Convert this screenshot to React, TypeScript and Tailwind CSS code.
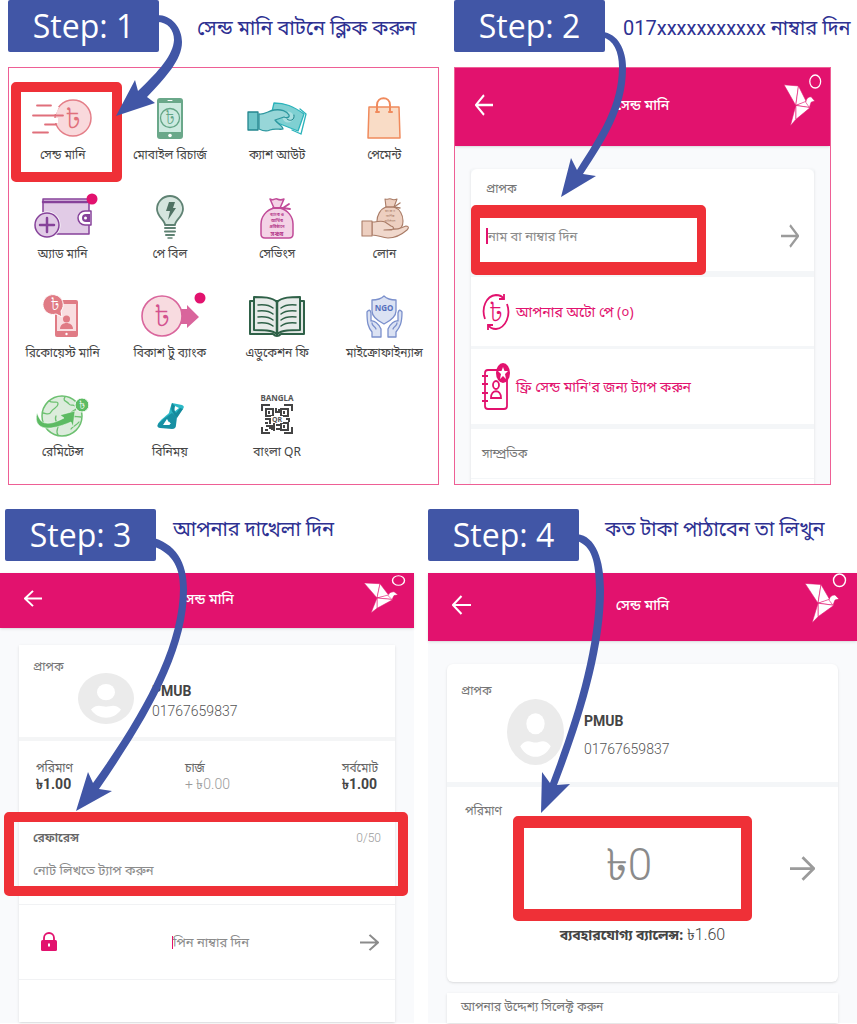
import { FC, ReactNode } from "react";

const TAKA = "৳";

/* ---------- menu icons, all on a 64x48 board ---------- */

const Board: FC<{ children: ReactNode }> = ({ children }) => (
	<svg viewBox="0 0 64 48" className="h-12 w-16 overflow-visible" fill="none" strokeLinecap="round" strokeLinejoin="round" aria-hidden="true">
		{children}
	</svg>
);

const Taka: FC<{ x: number; y: number; size: number; color: string }> = ({ x, y, size, color }) => (
	<text x={x} y={y} fontSize={size} fontWeight="300" fill={color} stroke="none" textAnchor="middle">
		{TAKA}
	</text>
);

const SendIcon = () => (
	<Board>
		<circle cx="42" cy="23" r="18" fill="#f9d9dc" stroke="#e47e88" strokeWidth="1.5" />
		<path d="M22 12h6l-3 7h-3zM21 23h6v5h-5z" fill="#fff" />
		<path d="M6 10.5h14M2 20.5h30M14 29.5h11M2 37.5h15" stroke="#e06f7b" strokeWidth="1.8" />
		<Taka x={42} y={33} size={28} color="#e06f7b" />
	</Board>
);

const RechargeIcon = () => (
	<Board>
		<rect x="19" y="3" width="26" height="41" rx="3" fill="#6aa88a" />
		<rect x="21" y="8" width="22" height="29" fill="#cdeae0" />
		<path d="M30 5.5h4" stroke="#fff" />
		<circle cx="32" cy="40.5" r="1.8" fill="#fff" />
		<circle cx="32" cy="23" r="9.5" stroke="#63a586" strokeWidth="1.3" />
		<Taka x={32} y={29} size={17} color="#63a586" />
	</Board>
);

const CashOutIcon = () => (
	<Board>
		<path d="M55 14l6 5-5 20-9-4" fill="#fff" stroke="#2bb3bb" strokeWidth="1.3" />
		<path d="M29 8c11 0 19 3 30 11l-6 17-28-11z" fill="#7fd0d2" stroke="#2bb3bb" strokeWidth="1.3" />
		<circle cx="43" cy="22" r="5.5" fill="#a9dfe0" />
		<path d="M14 19c5 1 9-3 15-4 7-1 13 1 15 5 1 3-3 3-5 2l-9 3c3 4 8 6 8 9-3 1-8-1-13 1-4 2-7 1-11-1z" fill="#97d6d8" stroke="#2d979f" strokeWidth="1.3" />
		<rect x="3" y="17" width="10" height="18" fill="#6fc6c9" stroke="#24868e" strokeWidth="1.3" />
		<path d="M49 20c1 5-4 7-7 4" stroke="#24868e" />
	</Board>
);

const BagIcon = () => (
	<Board>
		<path d="M17 12h30l1 31H16z" fill="#f9dcc6" stroke="#f08a5c" strokeWidth="1.5" />
		<path d="M25 17V10c0-9 13-9 13 0v7" stroke="#f08a5c" strokeWidth="2" />
		<path d="M24 17h3M37 17h3" stroke="#f08a5c" strokeWidth="2" />
	</Board>
);

const WalletIcon = () => (
	<Board>
		<path d="M12 5h46v35H12z" fill="#e1cbe6" stroke="#86429a" strokeWidth="1.5" />
		<path d="M12 8h44" stroke="#86429a" strokeWidth="2.5" />
		<path d="M60 17h-6a7 7 0 0 0 0 14h6z" fill="#fff" stroke="#86429a" strokeWidth="1.5" />
		<path d="M59 20h-4a4 4 0 0 0 0 8h4z" fill="#86429a" />
		<circle cx="54.5" cy="24" r="1.5" fill="#fff" />
		<circle cx="16" cy="31" r="13.5" fill="#fff" />
		<circle cx="16" cy="31" r="12" fill="#e1cbe6" stroke="#86429a" strokeWidth="1.5" />
		<path d="M9 31h14M16 24v14" stroke="#86429a" strokeWidth="2.5" />
		<circle cx="61" cy="5" r="5.5" fill="#e2126e" />
	</Board>
);

const BulbIcon = () => (
	<Board>
		<path d="M27 31c0-5-8-8-8-16a13 13 0 0 1 26 0c0 8-8 11-8 16z" fill="#d5e5de" stroke="#5f8273" strokeWidth="1.8" />
		<path d="M31 8h6l-2 6h3l-8 12 2-9h-4z" fill="#4f7263" />
		<path d="M27 34h10M27 37.5h10M28 41h8" stroke="#5f8273" strokeWidth="2" />
		<path d="M30 44h4" stroke="#5f8273" strokeWidth="1.5" />
	</Board>
);

const SavingsIcon = () => (
	<Board>
		<path d="M25 5c4 2 5-1 7 0s5 1 7 0l-4 9c8 2 13 9 13 16v10q0 4-4 4H20q-4 0-4-4V30c0-7 5-14 13-16z" fill="#f4d3e6" stroke="#c14b98" strokeWidth="1.5" />
		<path d="M28 14h10l6-4M38 14l7 1" stroke="#c14b98" strokeWidth="1.8" />
		<g fill="#b63d8d" fontSize="4" fontWeight="700" textAnchor="middle">
			<text x="32" y="22">ব্যাংক ও</text>
			<text x="32" y="28">আর্থিক</text>
			<text x="32" y="34">প্রতিষ্ঠানে</text>
			<text x="32" y="42" fontSize="6">সঞ্চয়</text>
		</g>
	</Board>
);

const LoanIcon = () => (
	<Board>
		<path d="M33 5c3 1 4-1 6 0s4 1 6 0l-3 8c6 2 9 8 9 14s-3 8-6 8H31c-3 0-6-3-6-8s3-12 9-14z" fill="#edcfc0" stroke="#a97c67" strokeWidth="1.1" />
		<path d="M34 13h8l6-4M42 13l6 1" stroke="#a97c67" strokeWidth="1.4" />
		<g fill="#a97c67" fontSize="3" textAnchor="middle">
			<text x="38" y="18">ব্যাংক ও</text>
			<text x="38" y="23">আর্থিক</text>
			<text x="38" y="28">প্রতিষ্ঠানে</text>
		</g>
		<path d="M20 28c6 0 9-2 13 0l6 4c4 1 3 4-1 4h-6l14-1 8-3c3 0 3 2 1 4-7 6-12 8-19 8-6 0-9-3-16-3z" fill="#f0d8cc" stroke="#a97c67" strokeWidth="1.1" />
		<path d="M10 27h10v15H10z" fill="#edcfc0" stroke="#a97c67" strokeWidth="1.1" />
	</Board>
);

const RequestIcon = () => (
	<Board>
		<rect x="24" y="7" width="23" height="37" rx="2" fill="#e07b85" />
		<path d="M26 11h19v27H26z" fill="#f9dde0" />
		<circle cx="35.5" cy="26" r="3.5" fill="#e07b85" />
		<path d="M29 36c0-8 13-8 13 0z" fill="#e07b85" />
		<circle cx="35.5" cy="41" r="1.2" fill="#fff" />
		<path d="M25 2a10 10 0 1 0 0 19l6 3-1-6a10 10 0 0 0-5-16z" fill="#e07b85" stroke="#fff" />
		<Taka x={24} y={17} size={16} color="#fff" />
	</Board>
);

const ToBankIcon = () => (
	<Board>
		<path d="M43 16h6v-4l12 12-12 11v-4h-6z" fill="#d9659c" />
		<circle cx="24" cy="23" r="20" fill="#f8dbe0" stroke="#d9659c" strokeWidth="1.6" />
		<Taka x={24} y={33} size={29} color="#d3528f" />
		<circle cx="62" cy="5" r="5.5" fill="#e2126e" />
	</Board>
);

const BookIcon = () => (
	<Board>
		<path d="M5 8h54v33H36q-4 4-8 0H5z" fill="#e2e7e4" stroke="#2f6148" strokeWidth="2" />
		<path d="M9 4c9 0 18 0 23 5 5-5 14-5 23-5v33c-9 0-18 0-23 4-5-4-14-4-23-4z" fill="#e7ebe9" stroke="#2f6148" strokeWidth="2" />
		<path d="M32 9v32" stroke="#2f6148" strokeWidth="2.5" />
		<path d="M13 12q10-1 15 3M13 18q10-1 15 3M13 24q10-1 15 3M13 30q10-1 15 3M51 12q-10-1-15 3M51 18q-10-1-15 3M51 24q-10-1-15 3M51 30q-10-1-15 3" stroke="#2f6148" strokeWidth="1.5" />
	</Board>
);

const NgoIcon = () => (
	<Board>
		<path d="M32 3c3 3 7 4 12 4v11c0 6-6 10-12 13-6-3-12-7-12-13V7c5 0 9-1 12-4z" fill="#dbe2f3" stroke="#7b90cc" strokeWidth="1.3" />
		<text x="32" y="18" fontSize="8" fontWeight="700" textAnchor="middle" fill="#5570bd">
			NGO
		</text>
		<path d="M20 44v-5c-4-5-5-9-5-20q3-4 4 1v8c3-1 8 3 10 8v8zM44 44v-5c4-5 6-9 6-20q-3-4-4 1v8c-3-1-8 3-10 8v8z" fill="#dbe2f3" stroke="#7b90cc" strokeWidth="1.3" />
		<path d="M20 30c0 3 3 3 4 6M45 30c0 3-3 3-4 6" stroke="#7b90cc" strokeWidth="1.3" />
	</Board>
);

const RemitIcon = () => (
	<Board>
		<circle cx="31" cy="24" r="20" fill="#dcecdc" stroke="#6cc070" strokeWidth="1.5" />
		<path d="M18 9c4 3 9-1 9 3s-5 4-7 8-5 1-8 1M34 5c-3 4 2 4 4 7s5-1 7 3-6 3-5 7 6 2 10 3M25 24c-2 4 1 6 2 9s-3 5 0 10M40 37c2-3 6-4 8-7" stroke="#6cc070" strokeWidth="1.3" />
		<path d="M6 21c-3 11 3 16 14 15 8-1 15-4 20-6l2 5 2-16-15 4 4 3c-6 3-12 6-18 5-5 0-7-5-9-10z" fill="#5dbb63" stroke="#fff" strokeWidth=".5" />
		<circle cx="51" cy="13" r="7" fill="#5dbb63" stroke="#fff" />
		<Taka x={51} y={17} size={11} color="#fff" />
	</Board>
);

const BinimoyIcon = () => (
	<Board>
		<path fillRule="evenodd" d="M34 11l10 2q3 1 1 4L25 35q-4 0-5-3c2-4 7-7 11-11q1-5 3-10zM37 14l4 2-5 4z" fill="#2bb8c6" />
		<path d="M34 11q-2 6 1 10 2 3 4 5l6-9-3-1-4 5q-3-4-1-7z" fill="#148a9c" />
		<path fillRule="evenodd" d="M20 32q-2 3 2 4l12 1q4 0 4-4l1-8-5-4q-8 5-14 11zM29 27l4 5-7 0z" fill="#1790a3" />
		<path d="M29 27l3 6h-7z" fill="#fff" />
	</Board>
);

const QrIcon = () => (
	<Board>
		<text x="32" y="9" fontSize="8" fontWeight="700" textAnchor="middle" fill="#555">
			BANGLA
		</text>
		<g stroke="#444" strokeLinecap="butt" strokeLinejoin="miter">
			<path d="M17 19v-6h8M39 13h8v6M17 35v6h8M39 41h8v-6" strokeWidth="2" />
			<path d="M21 17h7v7h-7zM36 17h7v7h-7zM36 31h7v7h-7z" strokeWidth="2" />
			<path d="M24 19v3M39 19v3M39 33v3M31 16v4h3v-3M20 27h5v5M21 34h6v4M29 31v8M31 37h4M20 38h3M41 27h3v3M31 33h4M20 31h3M24 36h3" strokeWidth="2" />
		</g>
		<rect x="26" y="24" width="12" height="7" fill="#fff" />
		<text x="32" y="30" fontSize="7" fontWeight="700" textAnchor="middle" fill="#555">
			QR
		</text>
	</Board>
);

const menu = [
	{ label: "সেন্ড মানি", icon: <SendIcon />, marked: true },
	{ label: "মোবাইল রিচার্জ", icon: <RechargeIcon /> },
	{ label: "ক্যাশ আউট", icon: <CashOutIcon /> },
	{ label: "পেমেন্ট", icon: <BagIcon /> },
	{ label: "অ্যাড মানি", icon: <WalletIcon /> },
	{ label: "পে বিল", icon: <BulbIcon /> },
	{ label: "সেভিংস", icon: <SavingsIcon /> },
	{ label: "লোন", icon: <LoanIcon /> },
	{ label: "রিকোয়েস্ট মানি", icon: <RequestIcon /> },
	{ label: "বিকাশ টু ব্যাংক", icon: <ToBankIcon /> },
	{ label: "এডুকেশন ফি", icon: <BookIcon /> },
	{ label: "মাইক্রোফাইন্যান্স", icon: <NgoIcon /> },
	{ label: "রেমিটেন্স", icon: <RemitIcon /> },
	{ label: "বিনিময়", icon: <BinimoyIcon /> },
	{ label: "বাংলা QR", icon: <QrIcon /> }
];

/* ---------- shared parts ---------- */

const StepBadge: FC<{ n: number }> = ({ n }) => (
	<h2 className="flex h-[52px] w-[151px] shrink-0 items-center justify-center rounded-xs bg-[#4156a6] font-['Open_Sans',sans-serif] text-[32px] leading-none text-white">
		Step: {n}
	</h2>
);

const Caption: FC<{ children: ReactNode }> = ({ children }) => (
	<p className="font-[Roboto,'Noto_Sans_Bengali',sans-serif] text-xl leading-10 whitespace-nowrap text-[#2e3192]">{children}</p>
);

const Pointer: FC<{ className: string; viewBox: string; d: string }> = ({ className, viewBox, d }) => (
	<svg className={`pointer-events-none absolute top-0 left-0 z-20 ${className}`} viewBox={viewBox} aria-hidden="true">
		<path d={d} fill="#4156a6" />
	</svg>
);

const Bird: FC<{ className: string }> = ({ className }) => (
	<svg className={className} viewBox="0 -10 42 48" preserveAspectRatio="none" aria-hidden="true">
		<g fill="#fff" stroke="#e2126e" strokeWidth=".6" strokeLinejoin="round">
			<path d="M0 0l16 1-3 18z" />
			<path d="M16 1l9 15-12 3z" />
			<path d="M13 19l12-4 4 6z" />
			<path d="M13 19l16 2-16 11z" />
			<path d="M13 19v13l-6 6z" />
			<path d="M24 16q1-5 6-5l4 4-4 1-2 5z" />
		</g>
		<ellipse cx="34.5" cy="-3" rx="6" ry="6" fill="none" stroke="#fff" strokeWidth="1.4" />
	</svg>
);

const ArrowIcon: FC<{ className: string; back?: boolean }> = ({ className, back }) => (
	<svg className={className} viewBox="0 0 20 20" preserveAspectRatio="none" fill="none" stroke="currentColor" strokeWidth="2.2" aria-hidden="true">
		{back ? <path d="M20 10H2M10 1l-9 9 9 9" /> : <path d="M0 10h18M10 1l9 9-9 9" />}
	</svg>
);

const AppBar: FC<{ height: string; back: string; bird: string }> = ({ height, back, bird }) => (
	<header className={`grid grid-cols-[1fr_auto_1fr] items-center bg-[#e2126e] text-white shadow-sm ${height}`}>
		<button type="button" aria-label="Back" className="w-fit pb-1">
			<ArrowIcon back className={back} />
		</button>
		<h3 className="pb-1 text-sm leading-6 font-medium">সেন্ড মানি</h3>
		<Bird className={`self-start justify-self-end ${bird}`} />
	</header>
);

const Avatar: FC<{ className: string }> = ({ className }) => (
	<svg className={className} viewBox="0 0 56 56" preserveAspectRatio="none" aria-hidden="true">
		<circle cx="28" cy="28" r="28" fill="#ebebeb" />
		<circle cx="28" cy="21" r="9" fill="#fff" />
		<path d="M13 40c6-7 11-3 15-3s9-4 15 3c-7 12-23 12-30 0z" fill="#fff" />
	</svg>
);

const AutoPayIcon = () => (
	<svg className="h-9 w-7" viewBox="0 0 28 36" fill="none" stroke="#e2126e" strokeWidth="1.8" aria-hidden="true">
		<path d="M3 25C-1 14 4 2 14 1c3 0 6 1 8 4M25 10c4 11-1 24-11 25-3 0-6-1-8-4" />
		<path d="M22 0v5h-5M6 36v-5h5" />
		<text x="14" y="27" fontSize="25" fontWeight="300" fill="#e2126e" stroke="none" textAnchor="middle">
			{TAKA}
		</text>
	</svg>
);

const ContactsIcon = () => (
	<svg className="h-12 w-7" viewBox="0 0 28 48" fill="none" stroke="#e2126e" strokeWidth="1.8" aria-hidden="true">
		<rect x="3" y="7" width="22" height="39" rx="3" />
		<path d="M0 13h6M0 21h6M0 30h6M0 38h6" />
		<ellipse cx="14" cy="22" rx="3" ry="4" />
		<path d="M9 35c0-9 10-9 10 0z" />
		<ellipse cx="21" cy="10" rx="7" ry="10" fill="#e2126e" stroke="none" />
		<path d="M21 4l1.5 4H26l-3 3 1 5-3-3-3 3 1-5-3-3h3.5z" fill="#fff" stroke="none" />
	</svg>
);

const LockIcon = () => (
	<svg className="h-5 w-4" viewBox="0 0 16 20" aria-hidden="true">
		<path d="M3 9V6a5 5 0 0 1 10 0v3" fill="none" stroke="#e2126e" strokeWidth="1.8" />
		<rect y="8" width="16" height="11" rx="1.5" fill="#e2126e" />
		<path d="M8 11.5v3" stroke="#fff" strokeWidth="2" />
	</svg>
);

/* ---------- steps ---------- */

const StepOne = () => (
	<section className="relative">
		<div className="flex gap-[38px]">
			<StepBadge n={1} />
			<div className="pt-2">
				<Caption>সেন্ড মানি বাটনে ক্লিক করুন</Caption>
			</div>
		</div>
		<ul className="mt-[15px] grid grid-cols-4 gap-y-[27px] border border-[#ee5f95] pt-[27px] pb-5">
			{menu.map(({ label, icon, marked }) => (
				<li key={label} className="relative">
					<button type="button" className="flex w-full flex-col items-center">
						{icon}
						<span className="text-xs leading-6 whitespace-nowrap text-[#444]">{label}</span>
					</button>
					{marked && <span className="absolute -top-[13px] -bottom-[15px] left-[2px] w-[111px] rounded-[5px] border-[10px] border-[#ef3037]" />}
				</li>
			))}
		</ul>
		<Pointer
			className="h-[120px] w-[192px]"
			viewBox="8 0 192 120"
			d="M157 15C172 15 182 28 182 42C182 60 165 78 147 97L155 103L116 116L135 80L138 91C160 70 173 55 174 40C174 30 168 22 157 22Z"
		/>
	</section>
);

const StepTwo = () => (
	<section className="relative">
		<div className="flex gap-[18px]">
			<StepBadge n={2} />
			<div className="pt-2">
				<Caption>017xxxxxxxxxxx নাম্বার দিন</Caption>
			</div>
		</div>
		<div className="mt-[15px] h-[418px] overflow-hidden border border-[#ee5f95] bg-[#f9fafc]">
			<AppBar height="h-[78px]" back="ml-5 h-[22px] w-[18px]" bird="mt-1.5 mr-2 h-[52px] w-[38px]" />
			<div className="mx-4 mt-[23px] flex flex-col bg-[#f4f6f8] shadow-sm">
				<div className="relative h-[102px] rounded-t-md bg-white px-[15px] pt-2">
					<label htmlFor="receiver" className="block text-xs leading-6 text-[#757575]">
						প্রাপক
					</label>
					<div className="flex h-[70px] items-center">
						<span className="h-4 w-0.5 bg-[#e2126e]" />
						<input id="receiver" placeholder="নাম বা নাম্বার দিন" className="min-w-0 flex-1 text-[13px] leading-6 outline-none placeholder:text-[#8b8b8b]" />
						<button type="button" aria-label="Next" className="text-[#9b9b9b]">
							<ArrowIcon className="h-6 w-[18px]" />
						</button>
					</div>
					<span className="pointer-events-none absolute top-9 -bottom-1 left-0 w-[235px] rounded-[5px] border-x-[9px] border-y-[13px] border-[#ef3037]" />
				</div>
				<button type="button" className="mt-1.5 flex h-[69px] items-center gap-1.5 bg-white pl-[11px] text-sm leading-6 text-[#e2126e]">
					<AutoPayIcon />
					আপনার অটো পে (০)
				</button>
				<button type="button" className="mt-[3px] flex h-[75px] items-center gap-1.5 bg-white pl-[11px] text-sm leading-6 text-[#e2126e]">
					<ContactsIcon />
					ফ্রি সেন্ড মানি'র জন্য ট্যাপ করুন
				</button>
				<h4 className="mt-[5px] flex h-[49px] items-center bg-white pl-[11px] text-xs leading-6 text-[#757575]">সাম্প্রতিক</h4>
				<div className="mt-px h-5 bg-white" />
			</div>
		</div>
		<Pointer
			className="h-[200px] w-[180px]"
			viewBox="454 0 180 200"
			d="M602 32C618 33 626 50 626 68C626 110 605 140 583 174L596 176L561 197L571 158L577 170C600 134 619 105 619 67C619 52 614 40 602 37Z"
		/>
	</section>
);

const StepThree = () => (
	<section className="relative flex flex-col">
		<div className="flex gap-[17px] pl-[5px]">
			<StepBadge n={3} />
			<Caption>আপনার দাখেলা দিন</Caption>
		</div>
		<div className="mt-3 flex-1 bg-[#f9fafc]">
			<AppBar height="h-[55px]" back="ml-6 h-[17px] w-[18px]" bird="mt-0.5 mr-2 h-[38px] w-[42px]" />
			<div className="mx-[19px] mt-[17px] flex flex-col bg-white shadow-sm">
				<div className="h-[92px] px-3.5 pt-2.5">
					<h4 className="text-xs leading-6 text-[#757575]">প্রাপক</h4>
					<div className="-mt-1.5 flex gap-[18px] pl-[45px]">
						<Avatar className="h-[51px] w-14" />
						<div className="pt-2 font-[Roboto,sans-serif] text-sm leading-5">
							<p className="font-bold text-[#444]">PMUB</p>
							<p className="font-light text-[#555]">01767659837</p>
						</div>
					</div>
				</div>
				<dl className="flex h-[75px] justify-between border-t-4 border-[#f4f5f6] px-[17px] pt-[18px] text-xs leading-[17px] text-[#666]">
					<div>
						<dt>পরিমাণ</dt>
						<dd className="font-[Roboto,sans-serif] text-sm leading-[17px] font-bold text-[#444]">{TAKA}1.00</dd>
					</div>
					<div>
						<dt>চার্জ</dt>
						<dd className="font-[Roboto,sans-serif] text-sm leading-[17px] font-light text-[#9b9b9b]">+ {TAKA}0.00</dd>
					</div>
					<div>
						<dt>সর্বমোট</dt>
						<dd className="font-[Roboto,sans-serif] text-sm leading-[17px] font-bold text-[#444]">{TAKA}1.00</dd>
					</div>
				</dl>
				<div className="relative h-[93px] border-b border-[#f1f2f4] px-3.5 pt-3.5">
					<div className="flex items-center justify-between text-xs leading-6">
						<label htmlFor="note" className="font-semibold text-[#666]">
							রেফারেন্স
						</label>
						<span className="font-[Roboto,sans-serif] font-light text-[#9b9b9b]">0/50</span>
					</div>
					<input id="note" maxLength={50} placeholder="নোট লিখতে ট্যাপ করুন" className="mt-2 block w-full text-[13px] leading-6 outline-none placeholder:text-[#8b8b8b]" />
					<span className="pointer-events-none absolute top-0 -right-[13px] bottom-2 -left-[15px] rounded-[5px] border-[10px] border-[#ef3037]" />
				</div>
				<div className="flex h-[75px] items-center justify-between border-b border-[#f1f2f4] pr-4 pl-[22px]">
					<LockIcon />
					<div className="flex items-center pl-2">
						<span className="h-[13px] w-px bg-[#e2126e]" />
						<input aria-label="পিন নাম্বার" type="password" placeholder="পিন নাম্বার দিন" className="w-[80px] text-[13px] leading-6 outline-none placeholder:text-[#8b8b8b]" />
					</div>
					<button type="button" aria-label="Next" className="text-[#8b8b8b]">
						<ArrowIcon className="h-[17px] w-[19px]" />
					</button>
				</div>
				<div className="h-[42px]" />
			</div>
		</div>
		<Pointer
			className="h-[310px] w-[200px]"
			viewBox="0 509 200 310"
			d="M150 537C176 543 187 562 187 590C187 650 150 715 99 789L112 791L76 811L88 772L93 783C144 712 180 645 180 588C180 565 171 552 150 545Z"
		/>
	</section>
);

const StepFour = () => (
	<section className="relative flex flex-col">
		<div className="flex gap-[26px]">
			<StepBadge n={4} />
			<Caption>কত টাকা পাঠাবেন তা লিখুন</Caption>
		</div>
		<div className="mt-3 flex-1 bg-[#f9fafc]">
			<AppBar height="h-[68px]" back="ml-6 h-5 w-[19px]" bird="mr-2.5 h-[50px] w-[42px]" />
			<div className="mx-[19px] mt-[23px] rounded-md bg-white shadow-sm">
				<div className="h-[118px] px-3.5 pt-[15px]">
					<h4 className="text-xs leading-6 text-[#757575]">প্রাপক</h4>
					<div className="-mt-1 flex gap-5 pl-[46px]">
						<Avatar className="h-[66px] w-[57px]" />
						<div className="pt-2 font-[Roboto,sans-serif] text-sm leading-7">
							<p className="font-bold text-[#444]">PMUB</p>
							<p className="font-light text-[#555]">01767659837</p>
						</div>
					</div>
				</div>
				<div className="relative h-[200px] border-t-[5px] border-[#f4f6f8] px-[18px] pt-3">
					<label htmlFor="amount" className="block text-xs leading-6 text-[#757575]">
						পরিমাণ
					</label>
					<div className="flex h-[90px] items-center">
						<input id="amount" defaultValue={`${TAKA}0`} className="mr-7 ml-[51px] min-w-0 flex-1 text-center font-[Roboto,sans-serif] text-[44px] leading-none font-light text-[#8b8b8b] outline-none" />
						<button type="button" aria-label="Next" className="mr-[5px] ml-5 text-[#9b9b9b]">
							<ArrowIcon className="h-[25px] w-[25px]" />
						</button>
					</div>
					<p className="pt-2.5 text-center text-sm leading-6 text-[#444]">
						<strong>ব্যবহারযোগ্য ব্যালেন্স:</strong> <span className="font-[Roboto,sans-serif] text-base font-light">{TAKA}1.60</span>
					</p>
					<span className="pointer-events-none absolute top-[29px] right-[86px] left-[66px] h-[105px] rounded-[5px] border-x-[11px] border-y-[12px] border-[#ef3037]" />
				</div>
			</div>
			<div className="mx-[19px] mt-[11px] h-[30px] bg-white pt-0.5 pl-3.5 shadow-sm">
				<h4 className="text-xs leading-6 text-[#757575]">আপনার উদ্দেশ্য সিলেক্ট করুন</h4>
			</div>
		</div>
		<Pointer
			className="h-[310px] w-[190px]"
			viewBox="428 509 190 310"
			d="M577 534C596 536 604 560 604 590C604 650 582 720 557 785L570 784L541 813L542 772L550 783C574 720 596 650 596 590C596 562 592 546 577 541Z"
		/>
	</section>
);

const App: FC = () => {
	return (
		<main className="overflow-hidden bg-white pb-0.5 font-['Noto_Sans','Noto_Sans_Bengali',sans-serif]">
			<div className="grid grid-cols-[minmax(0,431fr)_minmax(0,377fr)] gap-[15px] pr-[26px] pl-2">
				<StepOne />
				<StepTwo />
			</div>
			<div className="mt-6 grid grid-cols-[minmax(0,414fr)_minmax(0,429fr)] gap-3.5">
				<StepThree />
				<StepFour />
			</div>
		</main>
	);
};

export default App;
